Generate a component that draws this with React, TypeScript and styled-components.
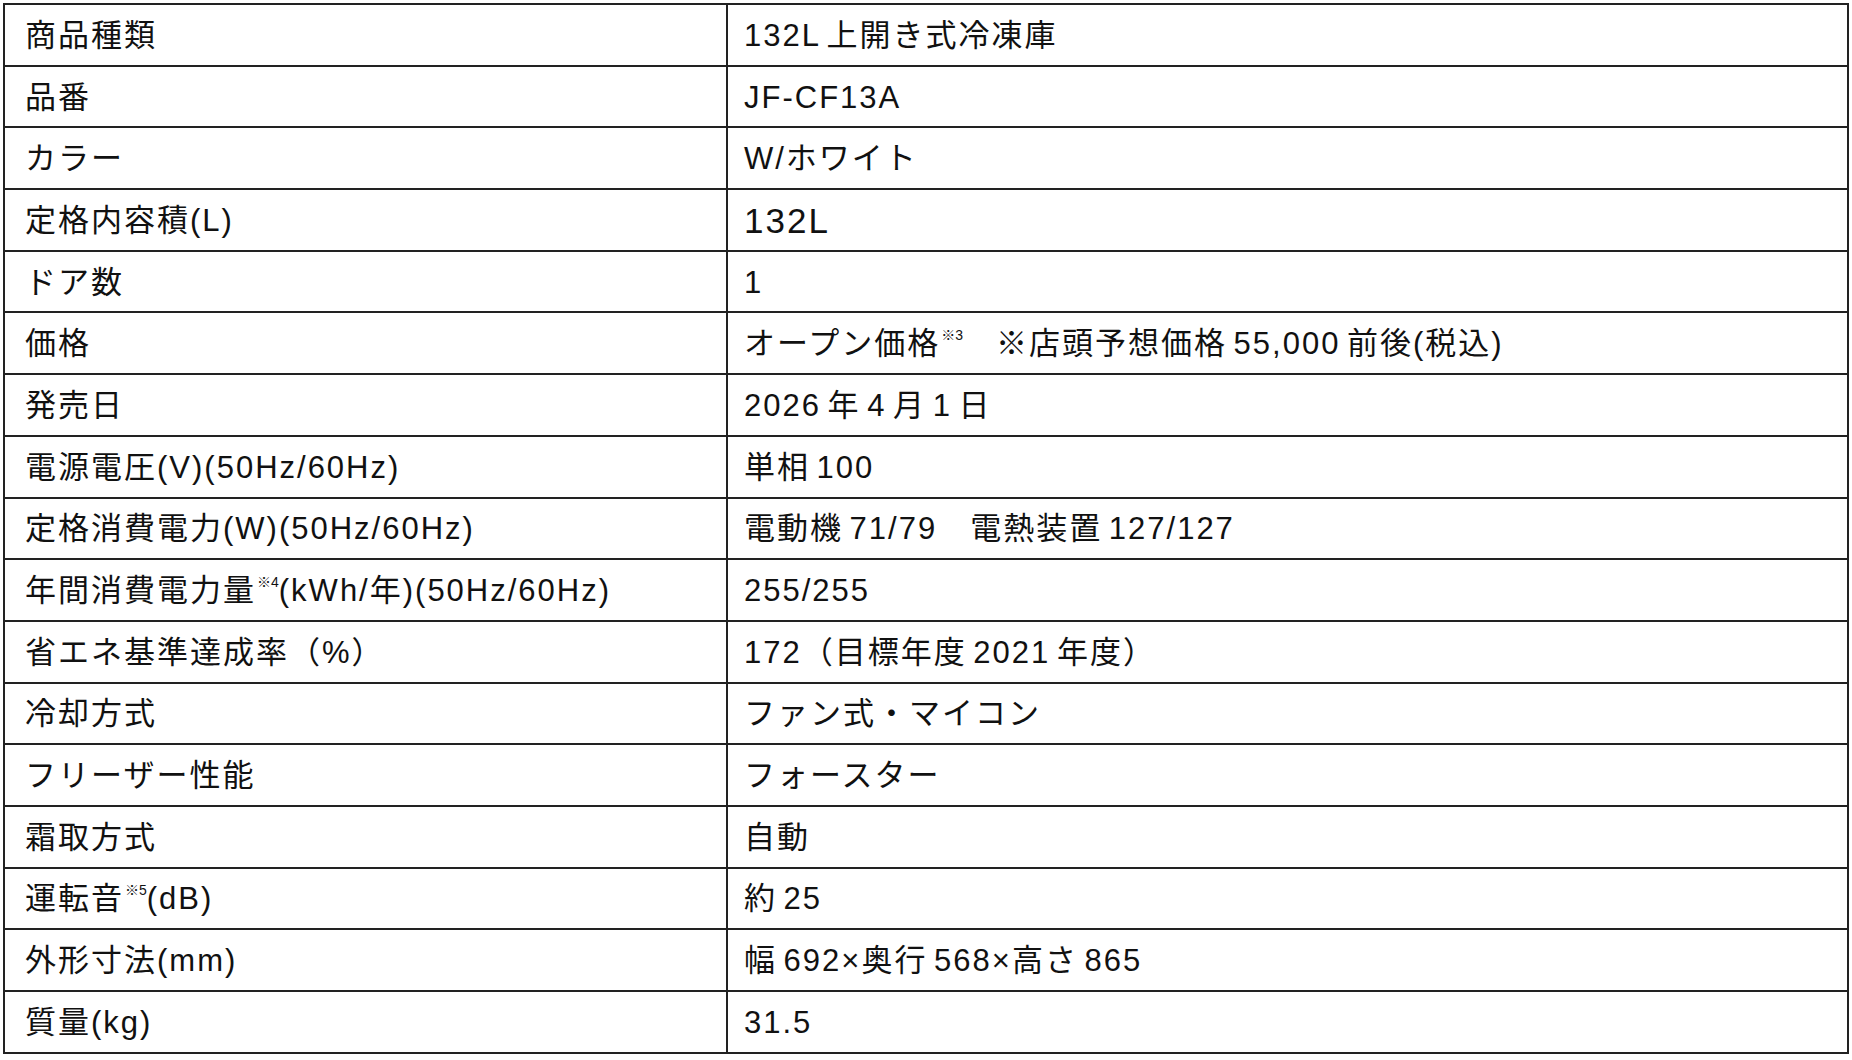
import styled, { createGlobalStyle } from 'styled-components';

const GlobalStyle = createGlobalStyle`
    html, body {
        margin: 0;
        padding: 0;
        background: #ffffff;
    }
    body {
        font-family: "Liberation Sans", "Noto Sans CJK JP", sans-serif;
        color: #111111;
    }
`

const Page = styled.div`
    padding: 3px 0 0 3px;
`

const SpecTable = styled.table`
    border-collapse: collapse;
    width: 1846px;
    table-layout: fixed;
    border: 2px solid #222222;
`

const Row = styled.tr`
    height: 61.7px;
`

const LabelCell = styled.td`
    width: 723px;
    box-sizing: border-box;
    border: 2px solid #222222;
    padding: 1px 0 0 20px;
    font-size: 31px;
    letter-spacing: 2px;
    word-spacing: -4px;
    line-height: 1;
    vertical-align: middle;
    white-space: nowrap;
`

const ValueCell = styled.td<{ $large?: boolean }>`
    border: 2px solid #222222;
    padding: 1px 0 0 16px;
    font-size: ${p => (p.$large ? '35px' : '31px')};
    letter-spacing: 2px;
    word-spacing: -4px;
    line-height: 1;
    vertical-align: middle;
    white-space: nowrap;
`

const Note = styled.sup`
    font-size: 14px;
    letter-spacing: 0;
    vertical-align: 14px;
    line-height: 0;
    margin-left: 1px;
`

type Spec = { label: React.ReactNode; value: React.ReactNode; large?: boolean };

const specs: Spec[] = [
    { label: '商品種類', value: '132L 上開き式冷凍庫' },
    { label: '品番', value: 'JF-CF13A' },
    { label: 'カラー', value: 'W/ホワイト' },
    { label: '定格内容積(L)', value: '132L', large: true },
    { label: 'ドア数', value: '1' },
    { label: '価格', value: <>オープン価格<Note>※3</Note>　※店頭予想価格 55,000 前後(税込)</> },
    { label: '発売日', value: '2026 年 4 月 1 日' },
    { label: '電源電圧(V)(50Hz/60Hz)', value: '単相 100' },
    { label: '定格消費電力(W)(50Hz/60Hz)', value: '電動機 71/79　電熱装置 127/127' },
    { label: <>年間消費電力量<Note>※4</Note>(kWh/年)(50Hz/60Hz)</>, value: '255/255' },
    { label: '省エネ基準達成率（%）', value: '172（目標年度 2021 年度）' },
    { label: '冷却方式', value: 'ファン式・マイコン' },
    { label: 'フリーザー性能', value: 'フォースター' },
    { label: '霜取方式', value: '自動' },
    { label: <>運転音<Note>※5</Note>(dB)</>, value: '約 25' },
    { label: '外形寸法(mm)', value: '幅 692×奥行 568×高さ 865' },
    { label: '質量(kg)', value: '31.5' },
];

export default function App() {
    return (
        <Page>
            <GlobalStyle />
            <SpecTable>
                <tbody>
                    {specs.map((s, i) => (
                        <Row key={i}>
                            <LabelCell>{s.label}</LabelCell>
                            <ValueCell $large={s.large}>{s.value}</ValueCell>
                        </Row>
                    ))}
                </tbody>
            </SpecTable>
        </Page>
    )
}
